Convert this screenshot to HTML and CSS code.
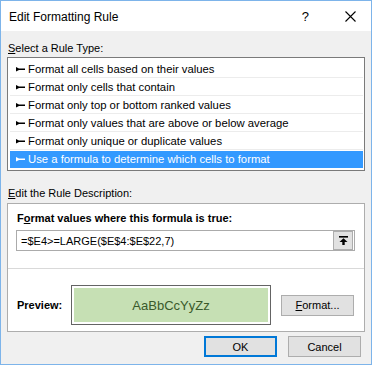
FILE: index.html
```html
<!DOCTYPE html>
<html>
<head>
<meta charset="utf-8">
<link rel="stylesheet" href="styles.css">
</head>
<body>
<div class="window">
  <div class="titlebar">
    <span class="title">Edit Formatting Rule</span>
    <span class="help">?</span>
    <svg class="close" width="11" height="11" viewBox="0 0 11 11"><path d="M0.5 0.5 L10.5 10.5 M10.5 0.5 L0.5 10.5" stroke="#000" stroke-width="1.1" fill="none"/></svg>
  </div>
  <div class="body">
    <div class="label"><u>S</u>elect a Rule Type:</div>
    <ul class="list">
      <li><svg class="bullet" width="9" height="5" viewBox="0 0 9 5"><polygon points="0,0 3,1.5 9,1.5 9,3 3,3 0,4.5" fill="currentColor"/></svg>Format all cells based on their values</li>
      <li><svg class="bullet" width="9" height="5" viewBox="0 0 9 5"><polygon points="0,0 3,1.5 9,1.5 9,3 3,3 0,4.5" fill="currentColor"/></svg>Format only cells that contain</li>
      <li><svg class="bullet" width="9" height="5" viewBox="0 0 9 5"><polygon points="0,0 3,1.5 9,1.5 9,3 3,3 0,4.5" fill="currentColor"/></svg>Format only top or bottom ranked values</li>
      <li><svg class="bullet" width="9" height="5" viewBox="0 0 9 5"><polygon points="0,0 3,1.5 9,1.5 9,3 3,3 0,4.5" fill="currentColor"/></svg>Format only values that are above or below average</li>
      <li><svg class="bullet" width="9" height="5" viewBox="0 0 9 5"><polygon points="0,0 3,1.5 9,1.5 9,3 3,3 0,4.5" fill="currentColor"/></svg>Format only unique or duplicate values</li>
      <li class="selected"><svg class="bullet" width="9" height="5" viewBox="0 0 9 5"><polygon points="0,0 3,1.5 9,1.5 9,3 3,3 0,4.5" fill="currentColor"/></svg>Use a formula to determine which cells to format</li>
    </ul>
    <div class="label label-2"><u>E</u>dit the Rule Description:</div>
    <div class="desc">
      <div class="desc-top">
        <div class="bold">F<u>o</u>rmat values where this formula is true:</div>
        <div class="input">
          <span class="formula">=$E4&gt;=LARGE($E$4:$E$22,7)</span>
          <span class="ref"><svg width="9" height="9" viewBox="0 0 9 9"><rect x="0" y="0" width="9" height="1.6" fill="#000"/><polygon points="4.5,2.2 8.5,6 0.5,6" fill="#000"/><rect x="3.3" y="5.5" width="2.4" height="3.5" fill="#000"/></svg></span>
        </div>
      </div>
      <div class="desc-bottom">
        <span class="bold preview-label">Preview:</span>
        <div class="preview"><div class="preview-inner">AaBbCcYyZz</div></div>
        <span class="btn format-btn"><u>F</u>ormat...</span>
      </div>
    </div>
    <div class="actions">
      <span class="btn ok">OK</span>
      <span class="btn">Cancel</span>
    </div>
  </div>
</div>
</body>
</html>
```
FILE: styles.css
```css
* { box-sizing: border-box; }
html, body { margin: 0; padding: 0; background: #fff; }
body {
  font-family: "Liberation Sans", Arial, sans-serif;
  font-size: 11px;
  color: #000;
}
.window {
  width: 372px;
  height: 365px;
  border: 1px solid #7db4ea;
  display: flex;
  flex-direction: column;
  background: #f0f0f0;
}
.titlebar {
  height: 30px;
  background: #fff;
  display: flex;
  align-items: center;
  padding-left: 8px;
}
.title { font-size: 12px; flex: 1; padding-top: 1px; }
.help { font-size: 13px; margin-right: 36px; padding-top: 1px; }
.close { margin-right: 15px; }
.body {
  flex: 1;
  padding: 10px 6px 0 6px;
  display: flex;
  flex-direction: column;
}
.label { line-height: 14px; height: 14px; margin-left: 1px; margin-bottom: 2px; }
.label-2 { margin-top: 15px; margin-bottom: 3px; }
.list {
  list-style: none;
  margin: 0;
  padding: 3px 1px 2px 2px;
  border: 1px solid #7a7a7a;
  background: #fff;
  font-size: 11.3px;
}
.list li {
  height: 17px;
  line-height: 16px;
  border-bottom: 1px solid #ececec;
  margin-bottom: 1px;
  padding-left: 6px;
  display: flex;
  align-items: center;
  white-space: nowrap;
}
.list li:last-child { border-bottom: 1px solid transparent; margin-bottom: 0; }
.list li.selected { background: #3399ff; color: #fff; }
.bullet { margin-right: 3px; flex: none; }
.desc {
  background: #fff;
  border: 1px solid #adadad;
}
.desc-top {
  height: 65px;
  padding: 7px 9px 0 8px;
  border-bottom: 1px solid #d9d9d9;
}
.bold { font-weight: bold; line-height: 14px; margin-left: 1px; }
.input {
  margin-top: 5px;
  height: 21px;
  border: 1px solid #ababab;
  display: flex;
  align-items: center;
  padding: 1px;
}
.formula { flex: 1; padding-left: 3px; }
.ref {
  width: 20px;
  height: 19px;
  background: #e1e1e1;
  border: 1px solid #adadad;
  display: flex;
  align-items: center;
  justify-content: center;
}
.desc-bottom {
  display: flex;
  align-items: center;
  padding: 16px 0 6px 8px;
}
.preview-label { width: 54px; flex: none; }
.preview {
  width: 200px;
  height: 40px;
  border: 1px solid #646464;
  padding: 2px;
  background: #fff;
}
.preview-inner {
  height: 100%;
  background: #c6e0b4;
  display: flex;
  align-items: center;
  justify-content: center;
  font-size: 13px;
  color: #3a5a2b;
}
.btn {
  width: 73px;
  height: 21px;
  background: #e1e1e1;
  border: 1px solid #adadad;
  display: flex;
  align-items: center;
  justify-content: center;
}
.format-btn { margin-left: 10px; }
.actions {
  display: flex;
  justify-content: flex-end;
  gap: 11px;
  margin-top: 4px;
  margin-right: 4px;
}
.ok { border: 2px solid #0078d7; }
```
